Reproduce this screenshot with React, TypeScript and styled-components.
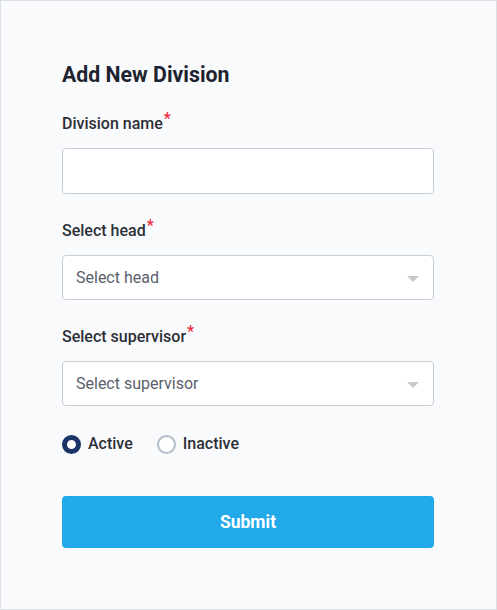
import styled, { createGlobalStyle } from 'styled-components';

const GlobalStyle = createGlobalStyle`
  html, body {
    margin: 0;
    padding: 0;
  }
  body {
    font-family: Roboto, 'Liberation Sans', sans-serif;
  }
  * {
    box-sizing: border-box;
  }
`;

export default function App() {
  return (
    <>
      <GlobalStyle />
      <Frame>
        <Form onSubmit={(e) => e.preventDefault()}>
          <Title>Add New Division</Title>
          <Field>
            <Label>
              Division name<Req>*</Req>
            </Label>
            <TextInput type="text" />
          </Field>
          <Field>
            <Label>
              Select head<Req>*</Req>
            </Label>
            <SelectBox>
              <span>Select head</span>
              <Caret />
            </SelectBox>
          </Field>
          <Field>
            <Label>
              Select supervisor<Req>*</Req>
            </Label>
            <SelectBox>
              <span>Select supervisor</span>
              <Caret />
            </SelectBox>
          </Field>
          <RadioRow>
            <RadioItem>
              <RadioDot $checked />
              Active
            </RadioItem>
            <RadioItem>
              <RadioDot />
              Inactive
            </RadioItem>
          </RadioRow>
          <SubmitButton type="submit">Submit</SubmitButton>
        </Form>
      </Frame>
    </>
  );
}

const Frame = styled.div`
  width: 497px;
  height: 610px;
  border: 1px solid #dcdfe4;
  background: #f9fafc;
  padding: 61px 63px 0 61px;
`;

const Form = styled.form`
  display: flex;
  flex-direction: column;
  width: 372px;
`;

const Title = styled.h2`
  margin: 0 0 27px;
  font-size: 21.3px;
  line-height: 25px;
  font-weight: 700;
  color: #1e2330;
`;

const Field = styled.div`
  display: flex;
  flex-direction: column;
  gap: 14px;
  margin-bottom: 27px;
`;

const Label = styled.label`
  font-size: 16px;
  line-height: 20px;
  font-weight: 500;
  color: #2c2f36;
`;

const Req = styled.sup`
  color: #f0283c;
  font-size: 16px;
  line-height: 0;
  position: relative;
  top: 1px;
  margin-left: 1px;
`;

const TextInput = styled.input`
  height: 46px;
  border: 1px solid #c6ccd8;
  border-radius: 4px;
  background: #fff;
  padding: 0 13px;
  font-size: 16px;
  font-family: inherit;
  outline: none;
`;

const SelectBox = styled.div`
  height: 45px;
  border: 1px solid #c6ccd8;
  border-radius: 4px;
  background: #fff;
  padding: 0 14px 0 13px;
  display: flex;
  align-items: center;
  justify-content: space-between;
  font-size: 16px;
  color: #5a606c;
`;

const Caret = styled.span`
  width: 0;
  height: 0;
  border-left: 6px solid transparent;
  border-right: 6px solid transparent;
  border-top: 6px solid #c8c8c8;
  margin-top: 2px;
`;

const RadioRow = styled.div`
  display: flex;
  align-items: center;
  gap: 24px;
  margin-top: 1px;
  margin-bottom: 42px;
`;

const RadioItem = styled.label`
  display: flex;
  align-items: center;
  gap: 7px;
  font-size: 16px;
  font-weight: 500;
  color: #2c2f36;
  line-height: 20px;
`;

const RadioDot = styled.span<{ $checked?: boolean }>`
  width: 19px;
  height: 19px;
  border-radius: 50%;
  background: #fff;
  border: ${(p) => (p.$checked ? '5px solid #1b3468' : '2px solid #b3bdcc')};
`;

const SubmitButton = styled.button`
  height: 52px;
  border: none;
  border-radius: 4px;
  background: #21a9ea;
  color: #fff;
  font-family: inherit;
  font-size: 17.5px;
  font-weight: 700;
  cursor: pointer;
`;
